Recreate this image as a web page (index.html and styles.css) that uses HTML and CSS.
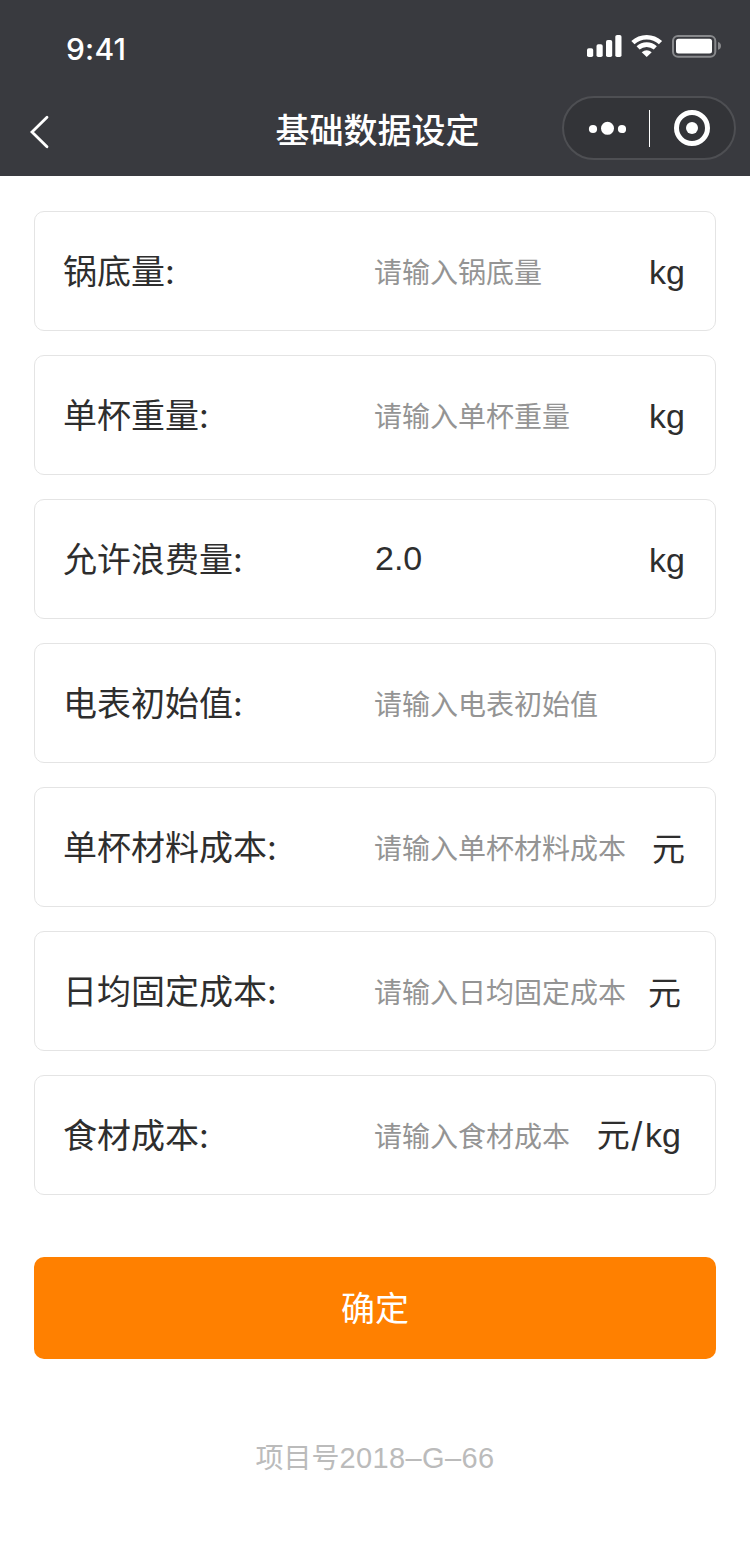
FILE: index.html
```html
<!DOCTYPE html>
<html lang="zh-CN">
<head>
<meta charset="utf-8">
<title>基础数据设定</title>
<link rel="stylesheet" href="styles.css">
</head>
<body>
<header class="header">
  <div class="status">
    <span class="time">9:41</span>
    <svg class="indicators" width="136" height="26" viewBox="0 0 136 26" fill="#fff">
      <rect x="2" y="14.300" width="6.200" height="8.700" rx="1.800"/><rect x="11.500" y="10.200" width="6.200" height="12.800" rx="1.800"/><rect x="21" y="6" width="6.200" height="17" rx="1.800"/><rect x="30.300" y="1" width="6.200" height="22" rx="1.800"/>
      <g fill="none" stroke="#fff" stroke-width="4.600"><path d="M47.900 8.700A20 20 0 0 1 75.500 8.700"/><path d="M53.100 13.900A12.800 12.800 0 0 1 70.300 13.900"/></g>
      <path d="M56.700 18.200A8 8 0 0 1 66.700 18.200L61.700 23Z"/>
      <rect x="88" y="2" width="42.300" height="20.800" rx="5" fill="none" stroke="#88898c" stroke-width="2"/><rect x="91" y="4.700" width="36" height="14.700" rx="2.500"/><path d="M133 8Q136 9 136 11.900T133 15.800Z" fill="#88898c"/>
    </svg>
  </div>
  <div class="nav">
    <svg class="back" width="24" height="36" viewBox="0 0 24 36" fill="none" stroke="#fff" stroke-width="2.800" stroke-linecap="round"><path d="M19 3.300 4 18 19 32.700"/></svg>
    <h1 class="title">基础数据设定</h1>
    <div class="capsule">
      <svg width="38" height="14" viewBox="0 0 38 14" fill="#fff"><circle cx="5" cy="8" r="4.100"/><circle cx="19.500" cy="7.300" r="6.500"/><circle cx="34" cy="8" r="4.100"/></svg>
      <span class="divider"></span>
      <svg width="36" height="36" viewBox="0 0 36 36" fill="none" stroke="#fff" stroke-width="5"><circle cx="18" cy="18" r="15.500"/><circle cx="18" cy="18" r="6" fill="#fff" stroke="none"/></svg>
    </div>
  </div>
</header>
<main class="form">
  <div class="row"><span class="label">锅底量:</span><span class="hint">请输入锅底量</span><span class="unit">kg</span></div>
  <div class="row"><span class="label">单杯重量:</span><span class="hint">请输入单杯重量</span><span class="unit">kg</span></div>
  <div class="row"><span class="label">允许浪费量:</span><span class="value">2.0</span><span class="unit">kg</span></div>
  <div class="row"><span class="label">电表初始值:</span><span class="hint">请输入电表初始值</span></div>
  <div class="row"><span class="label">单杯材料成本:</span><span class="hint">请输入单杯材料成本</span><span class="unit yuan">元</span></div>
  <div class="row inset"><span class="label">日均固定成本:</span><span class="hint">请输入日均固定成本</span><span class="unit yuan">元</span></div>
  <div class="row inset"><span class="label">食材成本:</span><span class="hint">请输入食材成本</span><span class="unit mixed"><span class="yuan">元</span><span class="slash">/</span>kg</span></div>
  <button class="submit">确定</button>
</main>
<footer class="footer">项目号<span class="code">2018–G–66</span></footer>
</body>
</html>
```
FILE: styles.css
```css
* { box-sizing: border-box; }
body { margin: 0; height: 1556px; background: #fff; color: #2e2e2e; font-family: Inter, "Noto Sans CJK SC", sans-serif; }
.header { height: 176px; background: #393a3f; color: #fff; }
.status { height: 88px; padding: 34px 29px 0 66px; display: flex; justify-content: space-between; align-items: flex-start; }
.time { font-size: 30px; line-height: 30px; font-weight: 550; letter-spacing: 0.2px; }
.nav { height: 88px; padding: 0 14px 0 28px; display: grid; grid-template-columns: 247.5px 1fr 174px; align-items: center; }
.title { margin: 0 0 3px; font-size: 34px; line-height: 50px; font-weight: 500; }
.capsule { height: 64px; margin-bottom: 8px; border: 2px solid #4e4f53; background: #333438; border-radius: 32px; display: flex; align-items: center; padding: 0 24px; justify-content: space-between; }
.divider { width: 1px; height: 37px; margin-right: 2px; background: #fff; }
.form { padding: 35px 34px 0; display: flex; flex-direction: column; gap: 24px; }
.row { height: 120px; padding: 0 30px 0 28px; border: 1px solid #e4e4e4; border-radius: 10px; display: grid; grid-template-columns: 311px 1fr auto; align-items: center; font-size: 34px; white-space: nowrap; }
.inset { padding-right: 34px; }
.label { padding-bottom: 3px; }
.hint { font-size: 28px; color: #949494; min-width: 0; width: 0; }
.value, .unit { font-family: "Liberation Sans", "Noto Sans CJK SC", sans-serif; }
.value { padding: 0 0 1px 1px; }
.unit { padding-top: 2px; }
.unit.mixed { padding: 0 0 4px; }
.yuan, .unit.yuan { font-size: 33px; padding: 0 0 1px; }
.slash { font-family: Inter, sans-serif; padding: 0 2px 0 1px; }
.submit { height: 102px; margin-top: 38px; padding-bottom: 5px; border: 0; border-radius: 10px; background: #ff8000; color: #fff; font: inherit; font-size: 34px; }
.footer { margin-top: 78px; text-align: center; font-size: 28px; line-height: 42px; color: #bbb; }
.code { font-family: "Liberation Sans", sans-serif; font-size: 29px; letter-spacing: 0.4px; }
```
